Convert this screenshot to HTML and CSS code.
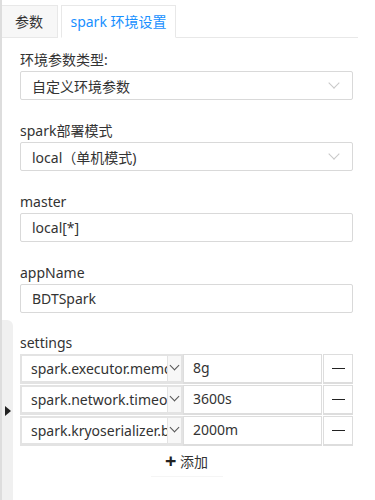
FILE: index.html
```html
<!DOCTYPE html>
<html lang="zh">
<head>
    <meta charset="UTF-8">
    <meta name="viewport" content="width=device-width, initial-scale=1.0">
    <title>spark 环境设置</title>
    <link rel="stylesheet" href="styles.css">
</head>
<body>
    <div class="page">
        <div class="tabs">
            <div class="tab">参数</div>
            <div class="tab active">spark 环境设置</div>
            <div class="tab-line"></div>
        </div>

        <div class="form">
            <div class="form-group">
                <label>环境参数类型:</label>
                <div class="select">
                    <span>自定义环境参数</span>
                    <span class="arrow"></span>
                </div>
            </div>

            <div class="form-group">
                <label>spark部署模式</label>
                <div class="select">
                    <span>local（单机模式)</span>
                    <span class="arrow"></span>
                </div>
            </div>

            <div class="form-group">
                <label>master</label>
                <div class="input">local[*]</div>
            </div>

            <div class="form-group">
                <label>appName</label>
                <div class="input">BDTSpark</div>
            </div>

            <div class="form-group settings">
                <label>settings</label>
                <div class="kv-row">
                    <div class="kv-key"><span class="kv-text">spark.executor.memory</span><span class="kv-arrow"><i></i></span></div>
                    <div class="kv-value">8g</div>
                    <div class="kv-remove"><i></i></div>
                </div>
                <div class="kv-row">
                    <div class="kv-key"><span class="kv-text">spark.network.timeout</span><span class="kv-arrow"><i></i></span></div>
                    <div class="kv-value">3600s</div>
                    <div class="kv-remove"><i></i></div>
                </div>
                <div class="kv-row">
                    <div class="kv-key"><span class="kv-text">spark.kryoserializer.buffer.max</span><span class="kv-arrow"><i></i></span></div>
                    <div class="kv-value">2000m</div>
                    <div class="kv-remove"><i></i></div>
                </div>
                <div class="add-btn"><span class="plus">+</span> 添加</div>
            </div>
        </div>

        <div class="side-toggle"><span class="tri"></span></div>
    </div>
</body>
</html>
```

FILE: styles.css
```css
body {
    margin: 0;
    font-family: "Noto Sans", "Noto Sans CJK SC", sans-serif;
    font-size: 14px;
    color: #333;
    background: #fff;
}
.page {
    position: relative;
    height: 500px;
    overflow: hidden;
    border-left: 2px solid #ddd;
    box-sizing: border-box;
}
.tabs {
    display: flex;
    align-items: flex-end;
    height: 38px;
    margin-left: -2px;
}
.tab {
    flex-shrink: 0;
    white-space: nowrap;
    box-sizing: border-box;
    height: 33px;
    line-height: 31px;
    text-align: center;
    border: 1px solid #e8e8e8;
    background: #f7f7f7;
    width: 58px;
    margin-right: 3px;
}
.tab.active {
    width: 115px;
    margin-right: 0;
    background: #fff;
    color: #1890ff;
    border-bottom-color: #fff;
}
.tab-line {
    flex: 1;
    margin-right: 17px;
    border-bottom: 1px solid #e8e8e8;
}
.form {
    padding: 11px 20px 0 18px;
    width: 333px;
}
.form-group {
    margin-bottom: 20px;
}
label {
    display: block;
    height: 22px;
    line-height: 22px;
}
.select,
.input {
    display: flex;
    align-items: center;
    justify-content: space-between;
    height: 27px;
    padding: 0 10px 0 11px;
    border: 1px solid #d9d9d9;
    border-radius: 2px;
}
.arrow {
    width: 7px;
    height: 7px;
    border-right: 1px solid #c8c8c8;
    border-bottom: 1px solid #c8c8c8;
    transform: rotate(45deg);
    margin: -5px 4px 0 0;
}
.settings label {
    margin-top: -1px;
}
.kv-row {
    display: flex;
    height: 30px;
    margin-bottom: 1px;
}
.kv-key {
    display: flex;
    flex-shrink: 0;
    width: 163px;
    border: 2px solid #e3e3e3;
    border-bottom-width: 3px;
    box-sizing: border-box;
}
.kv-text {
    flex: 1;
    overflow: hidden;
    white-space: nowrap;
    text-overflow: clip;
    padding: 0 6px 0 9px;
    line-height: 25px;
}
.kv-arrow {
    width: 13px;
    background: #f7f7f7;
    border-left: 1px solid #e3e3e3;
    display: flex;
    justify-content: center;
}
.kv-arrow i {
    width: 6px;
    height: 6px;
    border-right: 1px solid #555;
    border-bottom: 1px solid #555;
    transform: rotate(45deg);
    margin-top: 6px;
}
.kv-value {
    flex: 1;
    min-width: 0;
    border: 1px solid #ddd;
    border-bottom-width: 2px;
    line-height: 26px;
    padding: 0 9px;
}
.kv-remove {
    width: 28px;
    border: 1px solid #ddd;
    border-bottom-width: 2px;
    margin-left: 1px;
    display: flex;
    align-items: center;
    justify-content: center;
}
.kv-remove i {
    width: 13px;
    border-top: 1px solid #222;
}
.add-btn {
    text-align: center;
    margin: 0 auto;
    width: 72px;
    line-height: 28px;
    border-bottom: 1px solid #f5f5f5;
}
.plus {
    font-size: 20px;
    font-weight: bold;
    color: #222;
    vertical-align: -1px;
}
.side-toggle {
    position: absolute;
    left: 0;
    top: 320px;
    width: 11px;
    height: 180px;
    background: #f0f0f0;
    border-top-right-radius: 6px;
}
.tri {
    position: absolute;
    left: 3px;
    top: 86px;
    border-left: 6px solid #222;
    border-top: 5px solid transparent;
    border-bottom: 5px solid transparent;
}
```
